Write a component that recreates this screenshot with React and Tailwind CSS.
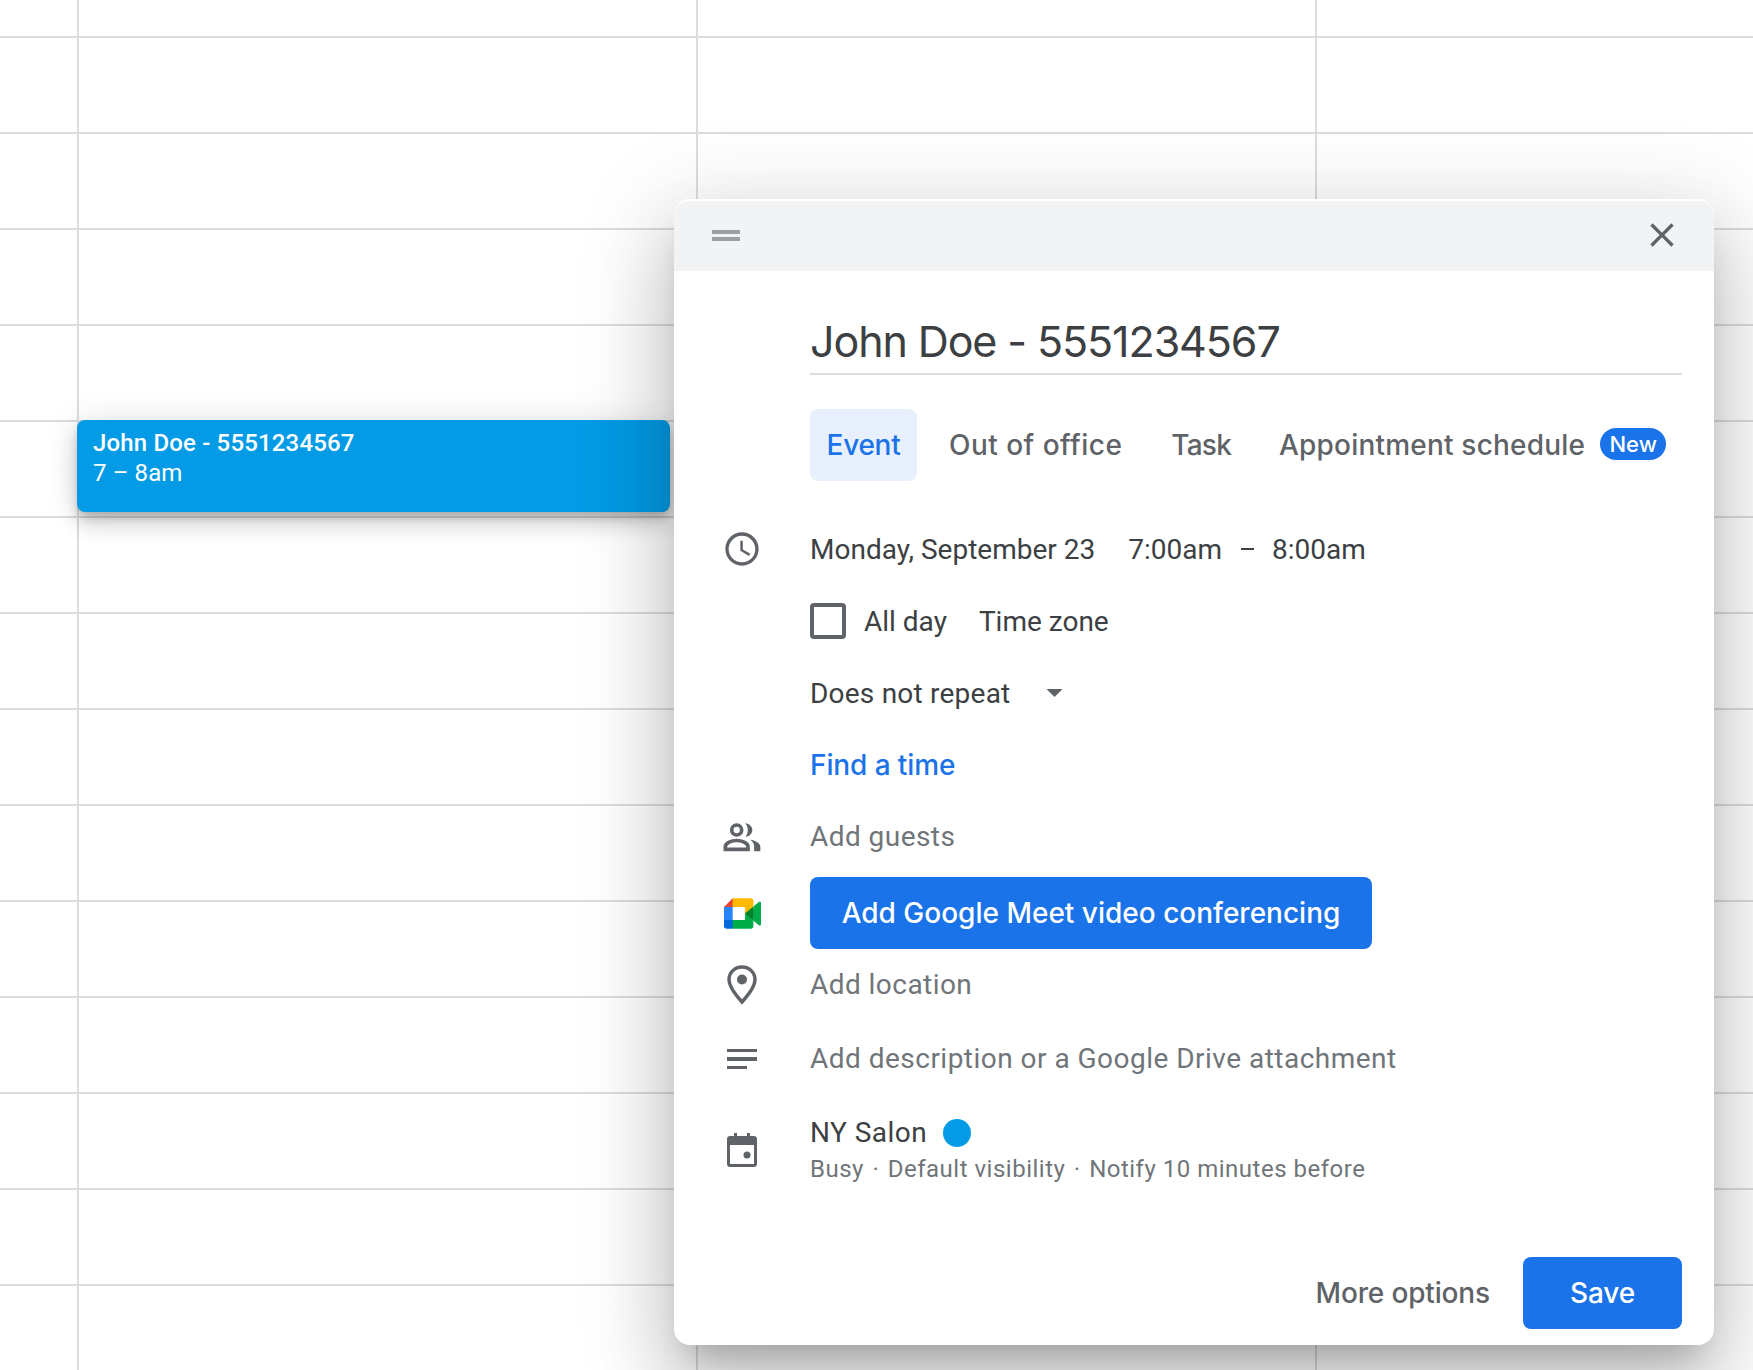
import React from "react";

const gsans = "font-['Inter',sans-serif]";
const iconColor = "#5f6368";

const Icon = ({ children }) => (
  <svg viewBox="0 0 24 24" className="w-[40px] h-[40px]" fill={iconColor}>
    {children}
  </svg>
);

const ClockIcon = () => (
  <Icon>
    <path d="M11.99 2C6.47 2 2 6.48 2 12s4.47 10 9.99 10C17.52 22 22 17.52 22 12S17.52 2 11.99 2zM12 20c-4.42 0-8-3.58-8-8s3.58-8 8-8 8 3.58 8 8-3.58 8-8 8zm.5-13H11v6l5.25 3.15.75-1.23-4.5-2.67z" />
  </Icon>
);

const CloseIcon = () => (
  <Icon>
    <path d="M19 6.41L17.59 5 12 10.59 6.41 5 5 6.41 10.59 12 5 17.59 6.41 19 12 13.41 17.59 19 19 17.59 13.41 12z" />
  </Icon>
);

const PeopleIcon = () => (
  <Icon>
    <circle cx="8.800" cy="7.800" r="3" fill="none" stroke={iconColor} strokeWidth="2.200" />
    <path d="M2 19.400v-1.600c0-2.300 3.900-3.700 6.800-3.700s6.800 1.400 6.800 3.700v1.600z" fill="none" stroke={iconColor} strokeWidth="2.200" />
    <path d="M14 3.700c2.300.2 4.200 1.900 4.200 4.100s-1.900 3.900-4.200 4.100c.9-1 1.500-2.500 1.500-4.100S14.900 4.700 14 3.700z" />
    <path d="M17 13.700c2.600.4 6 1.800 6 4.100v2.700h-3.700v-2.700c0-1.600-.9-3-2.300-4.100z" />
  </Icon>
);

const MeetLogo = () => (
  <svg viewBox="0 0 87.500 72" className="w-[37px] h-[31px]">
    <path fill="#00832d" d="M49.5 36l8.53 9.75 11.47 7.33 2-17.02-2-16.64-11.69 6.44z" />
    <path fill="#0066da" d="M0 51.5V66c0 3.315 2.685 6 6 6h14.5l3-10.96-3-9.54-9.95-3z" />
    <path fill="#e94235" d="M20.5 0L0 20.5l10.55 3 9.95-3 2.95-9.41z" />
    <path fill="#2684fc" d="M20.5 20.5H0v31h20.5z" />
    <path fill="#00ac47" d="M82.6 8.68L69.5 19.42v33.66l13.16 10.79c1.97 1.54 4.85.135 4.85-2.37V11c0-2.535-2.945-3.925-4.91-2.32zM49.5 36v15.5h-29V72h43c3.315 0 6-2.685 6-6V53.08z" />
    <path fill="#ffba00" d="M63.5 0h-43v20.5h29V36l20-16.57V6c0-3.315-2.685-6-6-6z" />
  </svg>
);

const PinIcon = () => (
  <svg viewBox="0 0 30 40" className="w-[30px] h-[40px]">
    <path d="M15 2C7.800 2 2 7.500 2 14.500 2 22 10 31.500 15 37c5-5.500 13-15 13-22.500C28 7.500 22.200 2 15 2z" fill="none" stroke={iconColor} strokeWidth="3.400" />
    <circle cx="15" cy="14.500" r="5" fill={iconColor} />
  </svg>
);

const NotesIcon = () => (
  <div className="flex flex-col gap-[5px] w-[30px]">
    <div className="h-[3.500px] w-[30px] bg-[#5f6368]" />
    <div className="h-[3.500px] w-[30px] bg-[#5f6368]" />
    <div className="h-[3.500px] w-[20px] bg-[#5f6368]" />
  </div>
);

const CalendarIcon = () => (
  <svg viewBox="0 0 30 34" className="w-[30px] h-[34px]">
    <path d="M7 0h3v3h10V0h3v3h4c1.700 0 3 1.300 3 3v25c0 1.700-1.300 3-3 3H3c-1.700 0-3-1.300-3-3V6c0-1.700 1.300-3 3-3h4zM3 12v19h24V12z" fill={iconColor} />
    <circle cx="20" cy="22" r="3.500" fill={iconColor} />
  </svg>
);

// One row of the form: icon column on the left, content on the right
const Row = ({ icon, className = "", children }) => (
  <div className={"flex items-center " + className}>
    <div className="w-[136px] shrink-0 pl-[48px] flex justify-center pr-[48px]">{icon}</div>
    <div className="flex items-center min-w-0">{children}</div>
  </div>
);

const CalendarGrid = () => {
  const rows = Array.from({ length: 15 }, (_, i) => i);

  return (
    <div className="grid grid-cols-[79px_619px_619px_1fr]">
      {rows.map((r) =>
        [0, 1, 2, 3].map((c) => (
          <div
            key={r + "-" + c}
            className={
              (r === 0 ? "h-[38px] " : "h-[96px] ") +
              (c === 3 ? "" : "border-r-2 ") +
              "border-b-2 border-[#dadce0]"
            }
          />
        ))
      )}
    </div>
  );
};

const EventChip = () => (
  <div className="absolute left-[77px] top-[420px] w-[593px] h-[92px] rounded-[8px] bg-[#039be5] px-[16px] pt-[8px] text-white text-[24px] leading-[30px] shadow-[0_12px_20px_0_rgba(0,0,0,0.14),0_2px_36px_0_rgba(0,0,0,0.12),0_6px_10px_-2px_rgba(0,0,0,0.2)]">
    <div className="font-medium tracking-[0.16px]">John Doe - 5551234567</div>
    <div className="tracking-[0.1px]">7 – 8am</div>
  </div>
);

const Tabs = () => (
  <div className={"flex items-center h-[72px] ml-[136px] mt-[34px] text-[#5f6368] text-[28px] font-medium " + gsans}>
    <div className="w-[107px] h-[72px] flex items-center justify-center rounded-[8px] bg-[#e8f0fe] text-[#1a73e8] tracking-[-0.3px]">Event</div>
    <div className="ml-[32px] tracking-[0.48px]">Out of office</div>
    <div className="ml-[49px] tracking-[-0.8px]">Task</div>
    <div className="ml-[48px] tracking-[0.2px]">Appointment schedule</div>
    <div className="ml-[15px] mb-[2px] w-[66px] h-[32px] rounded-full bg-[#1a73e8] text-white text-[22px] leading-[32px] text-center">New</div>
  </div>
);

const EventDialog = () => (
  <div className="absolute left-[674px] top-[199px] w-[1040px] h-[1146px] flex flex-col rounded-[16px] bg-white shadow-[0_48px_76px_6px_rgba(0,0,0,0.14),0_18px_92px_16px_rgba(0,0,0,0.12),0_22px_30px_-14px_rgba(0,0,0,0.2)] text-[#3c4043] text-[28px]">
    {/* Header */}
    <div className="h-[72px] shrink-0 flex items-center justify-between pl-[38px] pr-[32px] pb-[2px] bg-[#f1f3f4] border-t-2 border-white rounded-t-[16px]">
      <div className="flex flex-col gap-[3px]">
        <div className="w-[28px] h-[4px] bg-[#9aa0a6]" />
        <div className="w-[28px] h-[4px] bg-[#9aa0a6]" />
      </div>
      <CloseIcon />
    </div>

    {/* Title */}
    <div className="h-[104px] shrink-0 ml-[136px] mr-[32px] border-b-2 border-[#dadce0] flex items-end pb-[2px]">
      <div className={"text-[43px] leading-[60px] tracking-[-1.1px] " + gsans}>John Doe - 5551234567</div>
    </div>

    <Tabs />

    <Row icon={<ClockIcon />} className="h-[72px] mt-[32px]">
      <span className="pt-[2px]">Monday, September 23</span>
      <span className="ml-[33px] pt-[2px]">7:00am</span>
      <span className="ml-[19px] w-[13px] h-[2px] bg-[#3c4043]" />
      <span className="ml-[18px] pt-[2px]">8:00am</span>
    </Row>

    <Row className="h-[72px]">
      <div className="w-[36px] h-[36px] rounded-[4px] border-4 border-[#5f6368]" />
      <span className="ml-[18px] pt-[2px]">All day</span>
      <span className="ml-[32px] pt-[2px]">Time zone</span>
    </Row>

    <Row className="h-[72px]">
      <span className="pt-[1px] tracking-[0.22px]">Does not repeat</span>
      <svg viewBox="0 0 16 8" className="ml-[36px] w-[17px] h-[8px]">
        <path d="M0 0h16L8 8z" fill={iconColor} />
      </svg>
    </Row>

    <Row className="h-[72px]">
      <span className={"font-medium text-[#1a73e8] tracking-[-0.1px] " + gsans}>Find a time</span>
    </Row>

    <Row icon={<PeopleIcon />} className="h-[72px] text-[#70757a]">
      <span className="tracking-[0.45px]">Add guests</span>
    </Row>

    <Row icon={<MeetLogo />} className="h-[72px] mt-[4px]">
      <div className={"w-[562px] h-[72px] flex items-center justify-center rounded-[8px] bg-[#1a73e8] text-white font-medium " + gsans}>
        Add Google Meet video conferencing
      </div>
    </Row>

    <Row icon={<PinIcon />} className="h-[72px] text-[#70757a]">
      <span className="tracking-[0.45px]">Add location</span>
    </Row>

    <Row icon={<NotesIcon />} className="h-[72px] mt-[2px] text-[#70757a]">
      <span className="tracking-[0.48px]">Add description or a Google Drive attachment</span>
    </Row>

    <Row icon={<CalendarIcon />} className="h-[72px] mt-[19px]">
      <div className="flex flex-col">
        <div className="flex items-center h-[38px]">
          <span className="tracking-[0.45px]">NY Salon</span>
          <span className="ml-[16px] w-[28px] h-[28px] rounded-full bg-[#039be5]" />
        </div>
        <div className="h-[34px] flex items-center text-[24px] text-[#70757a] tracking-[0.5px]">
          <span>Busy</span>
          <span className="mx-[8.500px]">·</span>
          <span>Default visibility</span>
          <span className="mx-[8.500px]">·</span>
          <span>Notify 10 minutes before</span>
        </div>
      </div>
    </Row>

    {/* Footer */}
    <div className={"mt-auto mb-[16px] mr-[32px] flex items-center justify-end font-medium tracking-[-0.15px] " + gsans}>
      <span className="text-[#5f6368]">More options</span>
      <div className="ml-[33px] w-[159px] h-[72px] flex items-center justify-center rounded-[8px] bg-[#1a73e8] text-white">
        Save
      </div>
    </div>
  </div>
);

const App = () => {
  return (
    <div className="relative w-[1753px] h-[1370px] overflow-hidden bg-white font-['Roboto',sans-serif]">
      <CalendarGrid />
      <EventChip />
      <EventDialog />
    </div>
  );
};

export default App;
